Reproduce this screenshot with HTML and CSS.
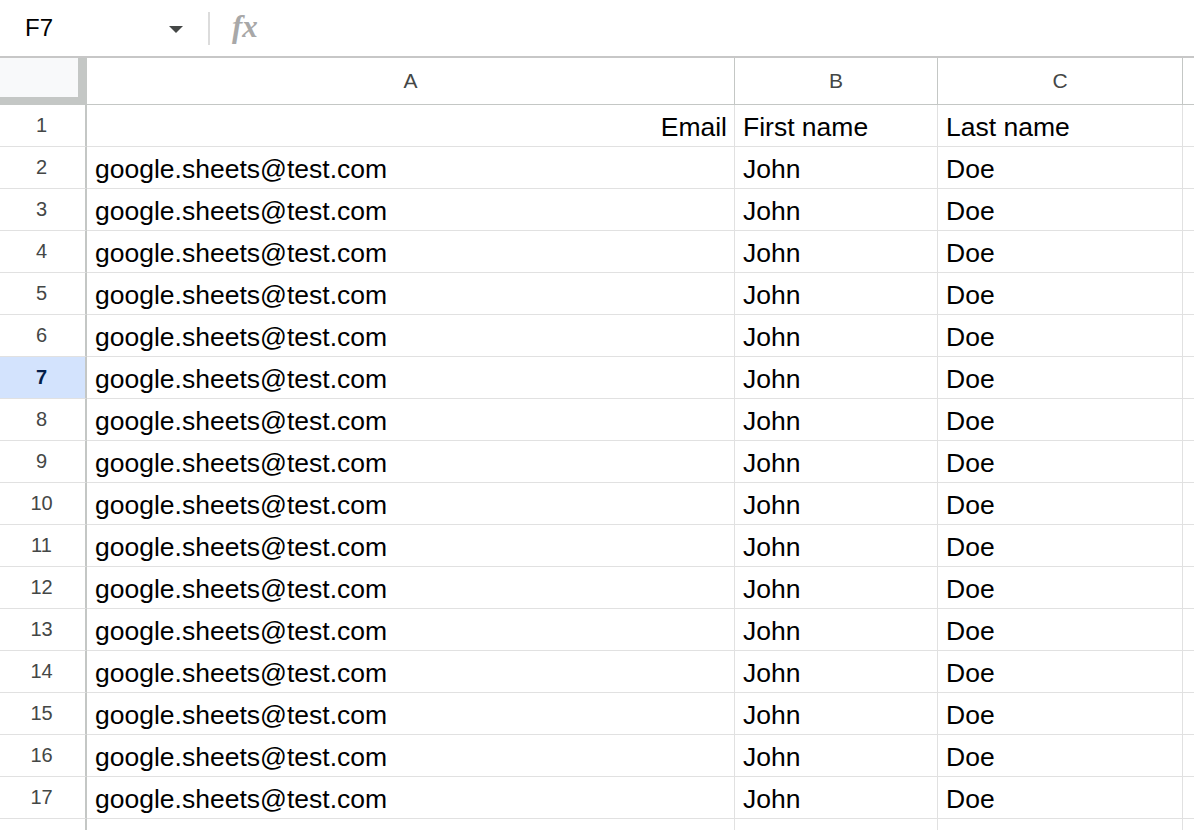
FILE: index.html
```html
<!DOCTYPE html>
<html lang="en">
  <head>
    <meta charset="UTF-8" />
    <title>Sheet</title>
    <link rel="stylesheet" href="styles.css">
  </head>
  <body>
    <div class="formula-bar">
      <div class="name-box">
        <span class="name-box-text">F7</span>
        <span class="name-box-arrow"></span>
      </div>
      <span class="divider"></span>
      <span class="fx">fx</span>
    </div>

    <div class="sheet">
      <div class="corner"></div>
      <div class="col-head">A</div>
      <div class="col-head">B</div>
      <div class="col-head">C</div>
      <div class="col-head last"></div>

      <div class="row-head">1</div>
      <div class="cell right">Email</div>
      <div class="cell">First name</div>
      <div class="cell">Last name</div>
      <div class="cell last"></div>

      <div class="row-head">2</div>
      <div class="cell">google.sheets@test.com</div>
      <div class="cell">John</div>
      <div class="cell">Doe</div>
      <div class="cell last"></div>

      <div class="row-head">3</div>
      <div class="cell">google.sheets@test.com</div>
      <div class="cell">John</div>
      <div class="cell">Doe</div>
      <div class="cell last"></div>

      <div class="row-head">4</div>
      <div class="cell">google.sheets@test.com</div>
      <div class="cell">John</div>
      <div class="cell">Doe</div>
      <div class="cell last"></div>

      <div class="row-head">5</div>
      <div class="cell">google.sheets@test.com</div>
      <div class="cell">John</div>
      <div class="cell">Doe</div>
      <div class="cell last"></div>

      <div class="row-head">6</div>
      <div class="cell">google.sheets@test.com</div>
      <div class="cell">John</div>
      <div class="cell">Doe</div>
      <div class="cell last"></div>

      <div class="row-head selected">7</div>
      <div class="cell">google.sheets@test.com</div>
      <div class="cell">John</div>
      <div class="cell">Doe</div>
      <div class="cell last"></div>

      <div class="row-head">8</div>
      <div class="cell">google.sheets@test.com</div>
      <div class="cell">John</div>
      <div class="cell">Doe</div>
      <div class="cell last"></div>

      <div class="row-head">9</div>
      <div class="cell">google.sheets@test.com</div>
      <div class="cell">John</div>
      <div class="cell">Doe</div>
      <div class="cell last"></div>

      <div class="row-head">10</div>
      <div class="cell">google.sheets@test.com</div>
      <div class="cell">John</div>
      <div class="cell">Doe</div>
      <div class="cell last"></div>

      <div class="row-head">11</div>
      <div class="cell">google.sheets@test.com</div>
      <div class="cell">John</div>
      <div class="cell">Doe</div>
      <div class="cell last"></div>

      <div class="row-head">12</div>
      <div class="cell">google.sheets@test.com</div>
      <div class="cell">John</div>
      <div class="cell">Doe</div>
      <div class="cell last"></div>

      <div class="row-head">13</div>
      <div class="cell">google.sheets@test.com</div>
      <div class="cell">John</div>
      <div class="cell">Doe</div>
      <div class="cell last"></div>

      <div class="row-head">14</div>
      <div class="cell">google.sheets@test.com</div>
      <div class="cell">John</div>
      <div class="cell">Doe</div>
      <div class="cell last"></div>

      <div class="row-head">15</div>
      <div class="cell">google.sheets@test.com</div>
      <div class="cell">John</div>
      <div class="cell">Doe</div>
      <div class="cell last"></div>

      <div class="row-head">16</div>
      <div class="cell">google.sheets@test.com</div>
      <div class="cell">John</div>
      <div class="cell">Doe</div>
      <div class="cell last"></div>

      <div class="row-head">17</div>
      <div class="cell">google.sheets@test.com</div>
      <div class="cell">John</div>
      <div class="cell">Doe</div>
      <div class="cell last"></div>

      <div class="row-head"></div>
      <div class="cell"></div>
      <div class="cell"></div>
      <div class="cell"></div>
      <div class="cell last"></div>
    </div>
  </body>
</html>
```

FILE: styles.css
```css
body {
  font-family: "Liberation Sans", Arial, sans-serif;
  background-color: #fff;
  color: #000;
  margin: 0;
  padding: 0;
  height: 830px;
  overflow: hidden;
}

.formula-bar {
  display: flex;
  align-items: center;
  height: 56px;
  border-bottom: 2px solid #c7c7c7;
}

.name-box {
  display: flex;
  align-items: center;
  justify-content: space-between;
  width: 158px;
  padding: 0 25px 0 25px;
}

.name-box-text {
  font-size: 24px;
  color: #000;
}

.name-box-arrow {
  width: 0;
  height: 0;
  border-left: 7px solid transparent;
  border-right: 7px solid transparent;
  border-top: 7px solid #444746;
  margin-top: 2px;
}

.divider {
  width: 2px;
  height: 33px;
  background-color: #dcdcdc;
  margin-right: 22px;
}

.fx {
  font-family: "Liberation Serif", serif;
  font-style: italic;
  font-weight: bold;
  font-size: 31px;
  color: #a8a8a8;
  margin-top: -3px;
}

.sheet {
  display: grid;
  grid-template-columns: 87px 648px 203px 245px 1fr;
  grid-template-rows: 47px;
  grid-auto-rows: 42px;
}

.corner {
  background-color: #f8f9fa;
  border-right: 9px solid #c4c7c5;
  border-bottom: 8px solid #c4c7c5;
}

.col-head {
  display: flex;
  align-items: center;
  justify-content: center;
  font-size: 21px;
  color: #444746;
  border-right: 1px solid #c4c7c5;
  border-bottom: 1px solid #c4c7c5;
}

.row-head {
  display: flex;
  align-items: center;
  justify-content: center;
  font-size: 20px;
  color: #444746;
  border-right: 2px solid #c4c7c5;
  border-bottom: 1px solid #e1e1e1;
  padding-right: 2px;
}

.row-head.selected {
  background-color: #d3e3fd;
  color: #041e49;
  font-weight: bold;
}

.cell {
  display: flex;
  align-items: flex-end;
  font-size: 26.5px;
  line-height: 29px;
  padding: 0 7px 4px 8px;
  white-space: nowrap;
  overflow: hidden;
  border-right: 1px solid #e1e1e1;
  border-bottom: 1px solid #e1e1e1;
}

.cell.right {
  justify-content: flex-end;
}

.last {
  border-right: none;
}
```
